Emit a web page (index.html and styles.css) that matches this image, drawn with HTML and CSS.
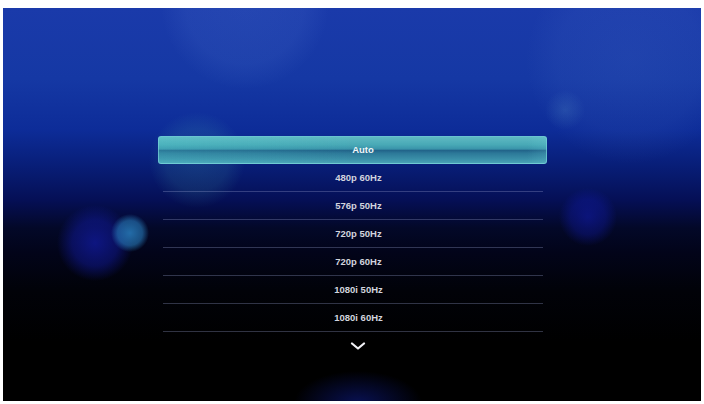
FILE: index.html
```html
<!DOCTYPE html>
<html>
<head>
<meta charset="utf-8">
<link rel="stylesheet" href="styles.css">
</head>
<body>
<div class="screen">
  <div class="menu">
    <div class="row sel">Auto</div>
    <div class="row">480p 60Hz</div>
    <div class="row">576p 50Hz</div>
    <div class="row">720p 50Hz</div>
    <div class="row">720p 60Hz</div>
    <div class="row">1080i 50Hz</div>
    <div class="row">1080i 60Hz</div>
    <div class="more">
      <svg width="16" height="9" viewBox="0 0 16 9"><polyline points="2,1.5 8,6.5 14,1.5" fill="none" stroke="#f2f2f6" stroke-width="2.2" stroke-linecap="round" stroke-linejoin="round"/></svg>
    </div>
  </div>
</div>
</body>
</html>
```

FILE: styles.css
```css
html, body {
  margin: 0;
  padding: 0;
  background: #ffffff;
}
body {
  padding: 8px 3px 3px 3px;
  width: 704px;
  height: 404px;
  box-sizing: border-box;
  overflow: hidden;
}
.screen {
  width: 698px;
  height: 393px;
  display: flex;
  flex-direction: column;
  align-items: center;
  font-family: "Liberation Sans", Arial, sans-serif;
  background:
    radial-gradient(circle 84px at 242px -3px, rgba(110,150,230,0.13) 0, rgba(110,150,230,0.10) 70%, rgba(110,150,230,0) 100%),
    radial-gradient(circle 104px at 627px 52px, rgba(100,140,220,0.12) 0, rgba(100,140,220,0.08) 70%, rgba(100,140,220,0) 100%),
    radial-gradient(circle 20px at 562px 102px, rgba(110,180,210,0.18) 0, rgba(110,180,210,0) 100%),
    radial-gradient(circle 48px at 194px 152px, rgba(70,170,175,0.2) 0, rgba(70,170,175,0.14) 65%, rgba(70,170,175,0) 100%),
    radial-gradient(circle 19px at 127px 225px, rgba(40,125,190,0.85) 0, rgba(40,125,190,0.6) 65%, rgba(40,125,190,0) 100%),
    radial-gradient(circle 38px at 92px 235px, rgba(18,28,170,0.7) 0, rgba(18,28,170,0.45) 60%, rgba(18,28,170,0) 100%),
    radial-gradient(circle 29px at 585px 209px, rgba(16,26,165,0.6) 0, rgba(16,26,165,0.38) 60%, rgba(16,26,165,0) 100%),
    radial-gradient(ellipse 64px 32px at 355px 395px, rgba(15,30,150,0.55) 0, rgba(15,30,150,0) 100%),
    linear-gradient(180deg, #1a3aaa 0%, #1538a4 18%, #0d2c98 31%, #081e78 40%, #050f55 49%, #030828 56%, #02041a 62%, #010208 72%, #000000 85%);
}
.menu {
  margin-top: 128px;
  width: 389px;
  display: flex;
  flex-direction: column;
}
.row {
  height: 28px;
  line-height: 28px;
  margin: 0 4px 0 5px;
  padding-left: 12px;
  box-sizing: border-box;
  border-bottom: 1px solid rgba(150,160,205,0.32);
  text-align: center;
  color: #d2d4de;
  font-size: 9.5px;
  font-weight: bold;
  white-space: nowrap;
}
.row.sel {
  margin: 0;
  padding-left: 22px;
  border: 1px solid rgba(120,210,220,0.7);
  border-radius: 3px;
  line-height: 26px;
  color: #f0f6f8;
  background:
    linear-gradient(90deg, rgba(90,220,220,0.18) 0%, rgba(90,220,220,0.1) 25%, rgba(0,0,0,0) 50%, rgba(0,0,0,0) 95%, rgba(120,220,230,0.15) 100%),
    linear-gradient(180deg, #5fb9c2 0%, #48a9b6 30%, #3a94aa 46%, #22648a 52%, #2c7898 62%, #3a8fa8 85%, #4aa2b6 100%);
}
.more {
  height: 28px;
  display: flex;
  align-items: center;
  justify-content: center;
  padding-left: 12px;
}
.more svg {
  display: block;
}
```
